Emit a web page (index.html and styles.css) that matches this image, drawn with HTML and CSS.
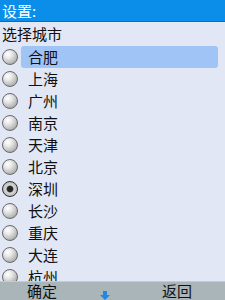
FILE: index.html
```html
<!DOCTYPE html>
<html lang="zh">
<head>
<meta charset="utf-8">
<link rel="stylesheet" href="styles.css">
</head>
<body>
<div class="screen">
  <div class="header">设置:</div>
  <div class="subtitle">选择城市</div>
  <div class="list">
    <div class="row"><span class="radio"></span><span class="label active">合肥</span></div>
    <div class="row"><span class="radio"></span><span class="label">上海</span></div>
    <div class="row"><span class="radio"></span><span class="label">广州</span></div>
    <div class="row"><span class="radio"></span><span class="label">南京</span></div>
    <div class="row"><span class="radio"></span><span class="label">天津</span></div>
    <div class="row"><span class="radio"></span><span class="label">北京</span></div>
    <div class="row"><span class="radio checked"></span><span class="label">深圳</span></div>
    <div class="row"><span class="radio"></span><span class="label">长沙</span></div>
    <div class="row"><span class="radio"></span><span class="label">重庆</span></div>
    <div class="row"><span class="radio"></span><span class="label">大连</span></div>
    <div class="row"><span class="radio"></span><span class="label">杭州</span></div>
  </div>
  <div class="footer">
    <span class="soft left">确定</span>
    <svg class="arrow" width="10" height="9" viewBox="0 0 10 9"><path d="M3 0h4v4h3l-5 5l-5-5h3z" fill="#1a8ae6"/></svg>
    <span class="soft right">返回</span>
  </div>
</div>
</body>
</html>
```
FILE: styles.css
```css
html, body {
  margin: 0;
  padding: 0;
}
body {
  width: 225px;
  height: 300px;
  overflow: hidden;
  font-family: "Noto Sans CJK SC", "DejaVu Sans", sans-serif;
  font-size: 15px;
  color: #101010;
}
.screen {
  width: 225px;
  height: 300px;
  display: flex;
  flex-direction: column;
  background: #e1e7f5;
}
.header {
  height: 21px;
  line-height: 21px;
  background: #0a8eea;
  border-bottom: 1px solid #1a64b0;
  color: #ffffff;
  padding-left: 2px;
  flex: none;
}
.subtitle {
  height: 24px;
  line-height: 23px;
  padding-left: 2px;
  flex: none;
}
.list {
  flex: 1;
  overflow: hidden;
}
.row {
  height: 22px;
  display: flex;
  align-items: center;
}
.radio {
  flex: none;
  width: 14px;
  height: 14px;
  margin-left: 2px;
  border-radius: 50%;
  border: 1px solid #6a6a6a;
  background: radial-gradient(circle at 35% 30%, #ffffff 0%, #e8e8e8 30%, #b0b0b0 75%, #8a8a8a 100%);
}
.radio.checked {
  border-color: #303030;
  background: radial-gradient(circle at 50% 50%, #202020 0%, #2a2a2a 28%, #d8d8d8 40%, #b8b8b8 75%, #909090 100%);
}
.label {
  flex: 1;
  height: 22px;
  line-height: 22px;
  margin-left: 3px;
  margin-right: 7px;
  padding-left: 7px;
  border-radius: 3px;
}
.label.active {
  background: #a0c4f6;
}
.footer {
  flex: none;
  height: 18px;
  border-top: 1px solid #c4ccd0;
  background: #a9b5b9;
  display: flex;
  align-items: center;
}
.soft {
  line-height: 18px;
}
.soft.left {
  margin-left: 27px;
}
.arrow {
  margin-left: 43px;
  margin-top: 8px;
}
.soft.right {
  margin-left: 52px;
}
```
